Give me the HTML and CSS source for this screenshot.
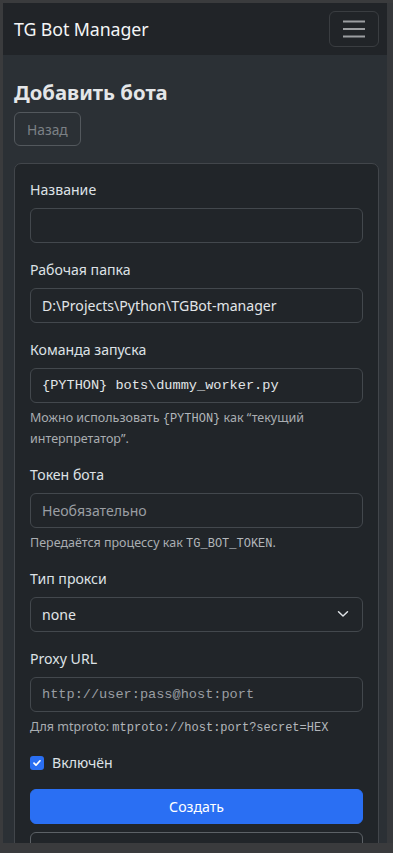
FILE: index.html
```html
<!DOCTYPE html>
<html lang="ru">
<head>
<meta charset="utf-8">
<title>TG Bot Manager</title>
<link rel="stylesheet" href="styles.css">
</head>
<body>
<div class="frame">
  <div class="viewport">
    <nav class="navbar">
      <span class="brand">TG Bot Manager</span>
      <button class="toggler" type="button" aria-label="Меню">
        <svg width="22" height="18" viewBox="0 0 22 18" aria-hidden="true">
          <path d="M0 1.5h22M0 9h22M0 16.5h22" stroke="#9c9ea1" stroke-width="2" fill="none"/>
        </svg>
      </button>
    </nav>
    <main class="page">
      <h1 class="title">Добавить бота</h1>
      <button class="btn-back" type="button" disabled>Назад</button>
      <form class="card">
        <div class="field">
          <label class="label">Название</label>
          <div class="input"></div>
        </div>
        <div class="field">
          <label class="label">Рабочая папка</label>
          <div class="input">D:\Projects\Python\TGBot-manager</div>
        </div>
        <div class="field field-help">
          <label class="label">Команда запуска</label>
          <div class="input mono">{PYTHON} bots\dummy_worker.py</div>
          <div class="help">Можно использовать <code>{PYTHON}</code> как “текущий интерпретатор”.</div>
        </div>
        <div class="field field-help">
          <label class="label">Токен бота</label>
          <div class="input placeholder">Необязательно</div>
          <div class="help">Передаётся процессу как <code>TG_BOT_TOKEN</code>.</div>
        </div>
        <div class="field">
          <label class="label">Тип прокси</label>
          <div class="input select">
            <span>none</span>
            <svg width="12" height="8" viewBox="0 0 12 8" aria-hidden="true">
              <path d="M1.5 1.8l4.5 4.2 4.5-4.2" stroke="#dee2e6" stroke-width="1.5" fill="none" stroke-linecap="round" stroke-linejoin="round"/>
            </svg>
          </div>
        </div>
        <div class="field field-help">
          <label class="label">Proxy URL</label>
          <div class="input mono placeholder">http://user:pass@host:port</div>
          <div class="help">Для mtproto: <code>mtproto://host:port?secret=HEX</code></div>
        </div>
        <div class="check">
          <span class="check-box">
            <svg width="10" height="10" viewBox="0 0 10 10" aria-hidden="true">
              <path d="M2 5.2l2 2 4-4.4" stroke="#fff" stroke-width="1.7" fill="none" stroke-linecap="round" stroke-linejoin="round"/>
            </svg>
          </span>
          <span class="check-label">Включён</span>
        </div>
        <div class="actions">
          <button class="btn-primary" type="button">Создать</button>
          <button class="btn-outline" type="button">Отмена</button>
        </div>
      </form>
    </main>
  </div>
  <div class="side"></div>
</div>
</body>
</html>
```

FILE: styles.css
```css
* { box-sizing: border-box; }

html, body {
  margin: 0;
  padding: 0;
  background: #3a3b3d;
  height: 853px;
  overflow: hidden;
}

body {
  font-family: "Noto Sans", "Open Sans", sans-serif;
  color: #dee2e6;
}

.frame {
  display: flex;
  padding: 3px 0 0 3px;
}

.viewport {
  width: 384px;
  height: 840px;
  overflow: hidden;
  background: #2b3035;
  display: flex;
  flex-direction: column;
}

.side {
  width: 6px;
  height: 840px;
  background: #36383b;
}

.navbar {
  height: 52px;
  flex: none;
  background: #212428;
  display: flex;
  align-items: center;
  justify-content: space-between;
  padding: 0 8px 0 11px;
}

.brand {
  font-size: 17.8px;
  line-height: 24px;
  color: #f4f5f6;
  letter-spacing: -0.1px;
}

.toggler {
  width: 50px;
  height: 36px;
  border: 1px solid #3a3d41;
  border-radius: 6px;
  background: transparent;
  display: flex;
  align-items: center;
  justify-content: center;
  padding: 0;
}

.page {
  padding: 24px 8px 0 11px;
}

.title {
  margin: 0 0 6px;
  font-size: 20.3px;
  line-height: 27px;
  font-weight: 700;
  color: #e4e6e8;
}

.btn-back {
  height: 34px;
  padding: 0 12px;
  border: 1px solid #53585d;
  border-radius: 6px;
  background: transparent;
  color: #7c8186;
  font-family: inherit;
  font-size: 13.8px;
  display: block;
}

.card {
  margin-top: 17px;
  background: #212529;
  border: 1px solid #42464b;
  border-radius: 7px;
  padding: 15px 15px 20px;
}

.field {
  margin-bottom: 16.5px;
}

.field-help {
  margin-bottom: 15.5px;
}

.label {
  display: block;
  font-size: 14.1px;
  line-height: 22px;
  margin-bottom: 7px;
  color: #dee2e6;
}

.input {
  height: 34.5px;
  border: 1px solid #43484d;
  border-radius: 6px;
  background: #212529;
  padding: 0 11px;
  display: flex;
  align-items: center;
  font-size: 14.1px;
  color: #e2e5e8;
  white-space: nowrap;
  overflow: hidden;
}

.mono {
  font-family: "Liberation Mono", "DejaVu Sans Mono", monospace;
  font-size: 13.6px;
}

.placeholder {
  color: #9a9ea3;
}

.select {
  justify-content: space-between;
  padding-right: 13px;
}

.help {
  margin-top: 4px;
  font-size: 12.5px;
  line-height: 21px;
  color: #a9adb1;
}

.help code {
  font-family: "Liberation Mono", "DejaVu Sans Mono", monospace;
  font-size: 12px;
  line-height: 1;
  color: #b3b7bb;
}

.check {
  display: flex;
  align-items: center;
  height: 22px;
  gap: 8px;
}

.check-box {
  width: 14px;
  height: 14px;
  border-radius: 3px;
  background: #2a6ff3;
  display: flex;
  align-items: center;
  justify-content: center;
}

.check-label {
  font-size: 14.1px;
  line-height: 22px;
}

.actions {
  margin-top: 15px;
  display: flex;
  flex-direction: column;
  gap: 7.5px;
}

.btn-primary,
.btn-outline {
  height: 35px;
  border-radius: 6px;
  font-family: inherit;
  font-size: 14.1px;
  width: 100%;
}

.btn-primary {
  background: #2a6ff3;
  border: 1px solid #2a6ff3;
  color: #fff;
}

.btn-outline {
  background: transparent;
  border: 1px solid #5c6166;
  color: #c5c8cb;
}
```
